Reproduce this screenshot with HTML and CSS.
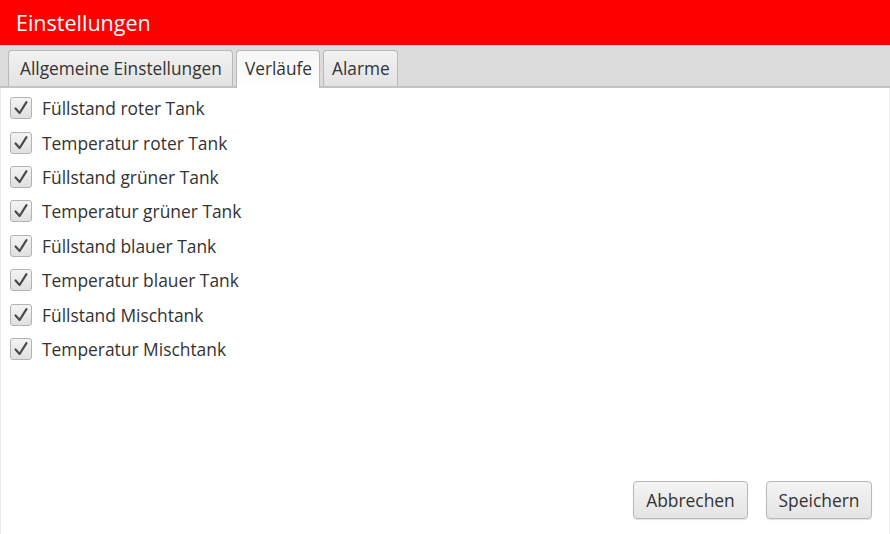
FILE: index.html
```html
<!DOCTYPE html>
<html lang="de">
<head>
<meta charset="utf-8">
<title>Einstellungen</title>
<link rel="stylesheet" href="styles.css">
</head>
<body>
<div class="window">
  <header class="titlebar">Einstellungen</header>
  <nav class="tabbar">
    <div class="tab tab-wide">Allgemeine Einstellungen</div>
    <div class="tab active">Verläufe</div>
    <div class="tab">Alarme</div>
  </nav>
  <main class="content">
    <ul class="checklist">
      <li><span class="box"><svg viewBox="0 0 22 22"><path d="M5 11.5 L9.5 16.5 L17 4.5"/></svg></span>Füllstand roter Tank</li>
      <li><span class="box"><svg viewBox="0 0 22 22"><path d="M5 11.5 L9.5 16.5 L17 4.5"/></svg></span>Temperatur roter Tank</li>
      <li><span class="box"><svg viewBox="0 0 22 22"><path d="M5 11.5 L9.5 16.5 L17 4.5"/></svg></span>Füllstand grüner Tank</li>
      <li><span class="box"><svg viewBox="0 0 22 22"><path d="M5 11.5 L9.5 16.5 L17 4.5"/></svg></span>Temperatur grüner Tank</li>
      <li><span class="box"><svg viewBox="0 0 22 22"><path d="M5 11.5 L9.5 16.5 L17 4.5"/></svg></span>Füllstand blauer Tank</li>
      <li><span class="box"><svg viewBox="0 0 22 22"><path d="M5 11.5 L9.5 16.5 L17 4.5"/></svg></span>Temperatur blauer Tank</li>
      <li><span class="box"><svg viewBox="0 0 22 22"><path d="M5 11.5 L9.5 16.5 L17 4.5"/></svg></span>Füllstand Mischtank</li>
      <li><span class="box"><svg viewBox="0 0 22 22"><path d="M5 11.5 L9.5 16.5 L17 4.5"/></svg></span>Temperatur Mischtank</li>
    </ul>
    <div class="actions">
      <button class="btn btn-cancel">Abbrechen</button>
      <button class="btn btn-save">Speichern</button>
    </div>
  </main>
</div>
</body>
</html>
```
FILE: styles.css
```css
html, body {
  margin: 0;
  padding: 0;
  background: #ffffff;
}
body {
  font-family: "Open Sans", "Noto Sans", sans-serif;
  color: #333333;
}
.window {
  width: 890px;
  height: 534px;
  display: flex;
  flex-direction: column;
  box-sizing: border-box;
}
.titlebar {
  background: #ff0000;
  color: #ffffff;
  height: 45px;
  box-sizing: border-box;
  padding: 8px 0 0 16px;
  font-size: 21.5px;
  line-height: 30px;
}
.tabbar {
  height: 43px;
  box-sizing: border-box;
  background: #dcdcdc;
  border-bottom: 2px solid #c4c4c4;
  display: flex;
  align-items: flex-end;
  gap: 3px;
  padding: 0 0 0 8px;
}
.tab {
  height: 36px;
  box-sizing: border-box;
  border: 1px solid #b9b9b9;
  border-bottom: none;
  border-radius: 4px 4px 0 0;
  background: linear-gradient(#f2f2f2, #e2e2e2);
  padding: 0 7px 0 8px;
  font-size: 17.3px;
  line-height: 36px;
  color: #333;
  white-space: nowrap;
}
.tab.tab-wide {
  padding: 0 10px 0 11px;
}
.tab.active {
  background: linear-gradient(#f6f6f6, #ffffff);
  height: 38px;
  margin-bottom: -2px;
  line-height: 36px;
}
.content {
  flex: 1;
  display: flex;
  flex-direction: column;
  border-left: 1px solid #ececec;
  border-right: 1px solid #ececec;
}
.checklist {
  list-style: none;
  margin: 0;
  padding: 3px 0 0 9px;
}
.checklist li {
  display: flex;
  align-items: center;
  height: 34.4px;
  font-size: 17.4px;
  color: #333;
}
.box {
  width: 22px;
  height: 22px;
  box-sizing: border-box;
  border: 1px solid #b3b3b3;
  border-radius: 3px;
  background: linear-gradient(#f4f4f4, #e0e0e0);
  margin-right: 10px;
  display: flex;
  align-items: center;
  justify-content: center;
}
.box svg {
  width: 20px;
  height: 20px;
}
.box path {
  fill: none;
  stroke: #4a4a4a;
  stroke-width: 2.4;
  stroke-linecap: round;
  stroke-linejoin: round;
}
.actions {
  margin-top: auto;
  display: flex;
  justify-content: flex-end;
  gap: 18px;
  padding: 0 17px 15px 0;
}
.btn {
  height: 38px;
  box-sizing: border-box;
  border: 1px solid #b9b9b9;
  border-radius: 4px;
  background: linear-gradient(#f4f4f4, #e4e4e4);
  box-shadow: 0 1px 1px rgba(0,0,0,0.12);
  font-family: "Open Sans", "Noto Sans", sans-serif;
  font-size: 17.4px;
  color: #333;
  padding: 0 6px;
}
.btn-cancel { width: 115px; }
.btn-save { width: 106px; }
```
